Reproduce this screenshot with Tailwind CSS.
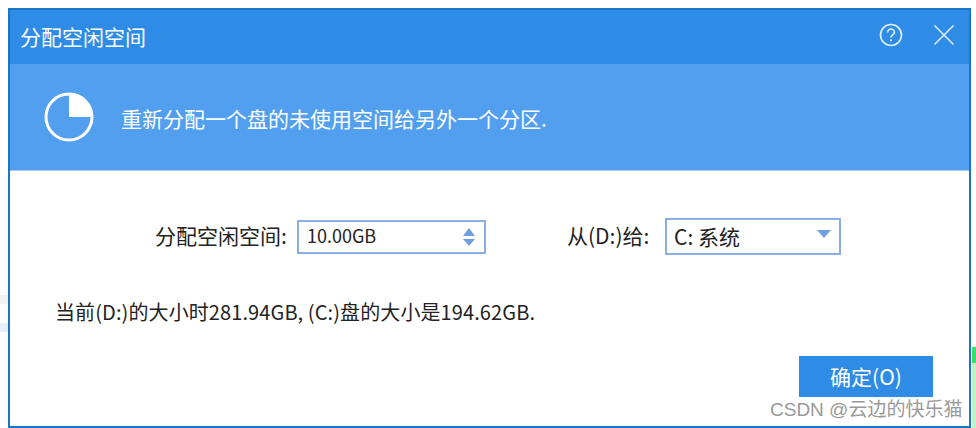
<!DOCTYPE html>
<html lang="zh">
<head>
    <meta charset="UTF-8">
    <title>分配空闲空间</title>
    <script src="https://cdn.jsdelivr.net/npm/@tailwindcss/browser@4"></script>
</head>
<body class="relative w-[976px] h-[428px] overflow-hidden bg-white font-['Noto_Sans_CJK_SC',sans-serif] text-[#222]">
    <!-- bits of the window behind the dialog -->
    <div class="absolute left-0 top-[295px] w-[8px] h-[9px] bg-[#eef0f3]"></div>
    <div class="absolute left-0 top-[323px] w-[8px] h-[9px] bg-[#e6eefa]"></div>
    <div class="absolute right-0 top-[347px] w-[4px] h-[81px] bg-[#c4f0c8]"></div>
    <div class="absolute right-0 top-[347px] w-[4px] h-[16px] bg-[#3ddc6a]"></div>

    <div class="ml-[8px] mt-[8px] w-[963px] h-[420px] border-2 border-[#1a76c4] flex flex-col">
        <header class="h-[54px] bg-[#2e8ce6] flex items-center justify-between pl-[10px] pr-[14px] text-white">
            <h1 class="text-[21px] font-normal">分配空闲空间</h1>
            <div class="flex items-center gap-[30px] mb-[4px]">
                <svg width="24" height="24" viewBox="0 0 24 24" fill="none" stroke="#dcecfb" stroke-width="1.7">
                    <circle cx="12" cy="12" r="10.5"/>
                    <path d="M8.6 9.4a3.4 3.4 0 0 1 6.8 0c0 2.4-3.4 2.4-3.4 5"/>
                    <path d="M12 16.2v2"/>
                </svg>
                <svg width="22" height="22" viewBox="0 0 22 22" fill="none" stroke="#dcecfb" stroke-width="1.6">
                    <path d="M1.5 1.5l19 19M20.5 1.5l-19 19"/>
                </svg>
            </div>
        </header>
        <div class="h-[107px] bg-[#539fef] flex items-center pl-[34px] text-white border-b border-[#a9cff7]">
            <svg width="50" height="50" viewBox="0 0 50 50" class="mr-[27px]">
                <circle cx="25" cy="25" r="23" fill="none" stroke="#fff" stroke-width="3"/>
                <path d="M25 2a23 23 0 0 1 23 23H25z" fill="#fff"/>
            </svg>
            <p class="text-[21px] pt-[3px]">重新分配一个盘的未使用空间给另外一个分区.</p>
        </div>
        <main class="flex-1 flex flex-col bg-white">
            <div class="flex items-center pl-[145px] pt-[47px]">
                <label class="text-[21px] w-[142px] mb-[2px]">分配空闲空间:</label>
                <div class="w-[189px] h-[34px] border-2 border-[#8aaee6] flex items-center justify-between pl-[8px] pr-[9px]">
                    <span class="text-[18px] mb-[2px]">10.00GB</span>
                    <div class="flex flex-col gap-[3px]">
                        <div class="w-0 h-0 border-x-[6px] border-x-transparent border-b-[8px] border-b-[#6f9fdc]"></div>
                        <div class="w-0 h-0 border-x-[6px] border-x-transparent border-t-[7px] border-t-[#6f9fdc]"></div>
                    </div>
                </div>
                <label class="text-[21px] ml-[81px] w-[98px] mb-[2px]">从(D:)给:</label>
                <div class="w-[176px] h-[37px] border-2 border-[#8aaee6] flex items-center justify-between pl-[7px] pr-[8px]">
                    <span class="text-[21px]">C: 系统</span>
                    <div class="w-0 h-0 mb-[6px] border-x-[7px] border-x-transparent border-t-[8px] border-t-[#6f9fdc]"></div>
                </div>
            </div>
            <p class="text-[20px] tracking-[0.1px] pl-[45px] mt-[42px]">当前(D:)的大小时281.94GB, (C:)盘的大小是194.62GB.</p>
            <div class="flex justify-end pr-[36px] mt-[29px]">
                <button class="w-[134px] h-[41px] bg-[#2e8ce6] text-white text-[21px]">确定(O)</button>
            </div>
        </main>
    </div>
    <!-- watermark over the dialog -->
    <div class="absolute left-[770px] top-[396px] text-[19px] text-[#999] font-['Liberation_Sans','Noto_Sans_CJK_SC',sans-serif]">CSDN @云边的快乐猫</div>
</body>
</html>
